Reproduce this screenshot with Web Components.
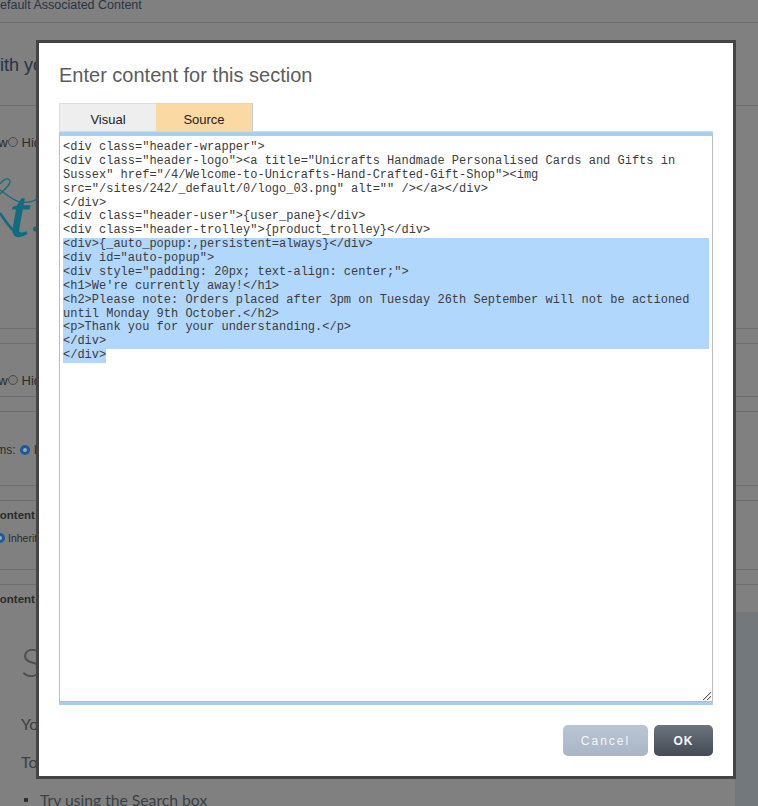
<!DOCTYPE html>
<html lang="en">
<head>
<meta charset="utf-8">
<title>Enter content for this section</title>
<style>
html,body{margin:0;padding:0;width:758px;height:806px;overflow:hidden;background:#808080}
</style>
</head>
<body>
<page-backdrop></page-backdrop>
<content-modal title-text="Enter content for this section"></content-modal>
<script>
function def(name, html, init){
  customElements.define(name, class extends HTMLElement{
    constructor(){super();this.attachShadow({mode:'open'}).innerHTML=html;}
    connectedCallback(){if(init)init(this);}
  });
}
def('bg-row',`<style>
:host{display:block;box-sizing:content-box;height:var(--h,14px);border-bottom:1px solid #6e6e6e;overflow:hidden;font:12px "Liberation Sans",sans-serif;color:#2b2b2b}
</style><slot></slot>`);
def('bg-radio',`<style>
:host{display:inline-block;box-sizing:border-box;width:10px;height:10px;border-radius:50%;border:1px solid #4c4c4c;background:#7c7c7c;flex:none}
:host([on]){border:3px solid #1d5a99;background:#9aa7b5}
</style>`);
def('radio-line',`<style>
:host{display:flex;align-items:center;height:14px;white-space:nowrap}
</style><slot></slot>`);
def('page-backdrop',`<style>
:host{display:block;width:758px;height:806px;overflow:hidden;background:#808080;font-family:"Liberation Sans",sans-serif}
.crumb{font-size:12.5px;line-height:14px;color:#263445;margin:-2px 0 0 -9px;white-space:nowrap}
.lead{font-size:18px;line-height:22px;color:#263445;margin:31px 0 0 -13px;white-space:nowrap}
.show{font-size:13px;margin-left:-25px;padding-top:29px}
.show2{font-size:13px;margin-left:-25px;padding-top:29px}
.t{margin-left:4px}
svg{display:block}
.logo{margin-top:15px;overflow:hidden}
.items-wrap{padding-top:31px;margin-left:-17px}
.b{font-weight:bold;font-size:11.5px;margin-left:-8.5px;line-height:14px;padding-top:7px}
.inh{margin:9px 0 0 -5px;font-size:10.5px}
.last-row{height:27px;overflow:hidden;font:12px "Liberation Sans",sans-serif;color:#2b2b2b}
.lower{display:flex;height:194px}
.copy{flex:1;min-width:0;font-family:Lato,sans-serif;color:#33404c;margin:0}
.s{font-family:Lato,sans-serif;font-weight:300;font-size:40px;line-height:48px;margin:26px 0 0 21px;color:#474f57}
.p{font-size:16px;line-height:20px;margin:0 0 0 21px;color:#3a4147}
.p1{margin-top:28px}.p2{margin-top:18px}
.li{display:flex;align-items:center;gap:12px;margin:18px 0 0 24px;font-size:15.7px;line-height:20px;color:#3a4147}
.sq{width:4px;height:4px;background:#2f2f2f;flex:none}
aside{width:23px;background:#73787c;flex:none}
</style>
<bg-row style="--h:22px"><div class="crumb">Default Associated Content</div></bg-row>
<bg-row style="--h:82px"><div class="lead">with yo</div></bg-row>
<bg-row style="--h:222px">
  <radio-line class="show">Show<bg-radio></bg-radio><span class="t">Hide</span></radio-line>
  <svg class="logo" width="37" height="80" viewBox="0 0 37 80" aria-hidden="true">
    <path d="M0 30C6 24 11 20 10 17C9 13 3 15 0 20M0 26C6 30 12 36 20 38C26 39 32 38 37 35" fill="none" stroke="#126c80" stroke-width="1.2"/>
    <path d="M0 49C4 55 8 62 15 68" fill="none" stroke="#126c80" stroke-width="2.6"/>
    <text x="10" y="72" font-family="Liberation Serif" font-style="italic" font-size="66" fill="#126c80" stroke="#126c80" stroke-width="1.4">t</text>
    <circle cx="35.5" cy="65" r="2.6" fill="#126c80"/>
  </svg>
</bg-row>
<bg-row style="--h:14px"></bg-row>
<bg-row style="--h:52px"><radio-line class="show2">Show<bg-radio></bg-radio><span class="t">Hide</span></radio-line></bg-row>
<bg-row style="--h:14px"></bg-row>
<bg-row style="--h:73px"><radio-line class="items-wrap">Items:<bg-radio on style="margin:0 4px"></bg-radio>Inherit</radio-line></bg-row>
<bg-row style="--h:14px"></bg-row>
<bg-row style="--h:68px"><div class="b">Content</div><radio-line class="inh"><bg-radio on style="margin-right:3px"></bg-radio>Inherit</radio-line></bg-row>
<bg-row style="--h:14px"></bg-row>
<div class="last-row"><div class="b">Content</div></div>
<div class="lower">
  <div class="copy">
    <div class="s">S</div>
    <div class="p p1">Yo</div>
    <div class="p p2">To</div>
    <div class="li"><span class="sq"></span><span>Try using the Search box</span></div>
  </div>
  <aside></aside>
</div>`);
def('tab-bar',`<style>
:host{display:flex;height:28px;font:13px/32px "Liberation Sans",sans-serif;color:#222}
div{text-align:center;box-sizing:border-box}
.v{width:97px;background:#eee;border:1px solid #ddd;border-bottom:0;border-right:0}
.s{width:97px;background:#fbd9a3;border-top:1px solid #e7d6b8;border-right:1px solid #c4ccd6}
</style><div class="v">Visual</div><div class="s">Source</div>`);
def('code-editor',`<style>
:host{display:block;height:574px;box-sizing:border-box}
.strip{height:3px;background:#a9cdf0}
.strip.top{height:4px;background:linear-gradient(#d3e5f7,#a9cdf0 40%);}
.box{box-sizing:border-box;height:567px;border:1px solid #bdbdbd;border-top-color:#c8c8c8;padding:5px 3px 0;overflow:hidden;position:relative}
pre{margin:0;font:12px/13.875px "Liberation Mono",monospace;color:#3c3c3c;white-space:pre}
.sel{background:#b2d7fd}
.last{display:inline-block;background:#b2d7fd}
svg{position:absolute;right:0;bottom:0}
</style>
<div class="strip top"></div>
<div class="box"><pre>&lt;div class="header-wrapper"&gt;
&lt;div class="header-logo"&gt;&lt;a title="Unicrafts Handmade Personalised Cards and Gifts in
Sussex" href="/4/Welcome-to-Unicrafts-Hand-Crafted-Gift-Shop"&gt;&lt;img
src="/sites/242/_default/0/logo_03.png" alt="" /&gt;&lt;/a&gt;&lt;/div&gt;
&lt;/div&gt;
&lt;div class="header-user"&gt;{user_pane}&lt;/div&gt;
&lt;div class="header-trolley"&gt;{product_trolley}&lt;/div&gt;
<div class="sel">&lt;div&gt;{_auto_popup:,persistent=always}&lt;/div&gt;
&lt;div id="auto-popup"&gt;
&lt;div style="padding: 20px; text-align: center;"&gt;
&lt;h1&gt;We're currently away!&lt;/h1&gt;
&lt;h2&gt;Please note: Orders placed after 3pm on Tuesday 26th September will not be actioned
until Monday 9th October.&lt;/h2&gt;
&lt;p&gt;Thank you for your understanding.&lt;/p&gt;
&lt;/div&gt;</div><span class="last">&lt;/div&gt;</span></pre>
<svg width="10" height="10" viewBox="0 0 10 10" aria-hidden="true"><path d="M1 9L9 1M5 9L9 5" stroke="#555" stroke-width="1"/><path d="M2 9L9 2M6 9L9 6" stroke="#ddd" stroke-width="1"/></svg>
</div>
<div class="strip"></div>`);
def('modal-button',`<style>
:host{display:flex;align-items:center;justify-content:center;box-sizing:border-box;height:31px;border-radius:5px;color:#f4f6f8;font:12px "Liberation Sans",sans-serif;cursor:pointer}
:host([kind=cancel]){width:85px;letter-spacing:2px;background:linear-gradient(#b9c5d3,#a9b6c6)}
:host([kind=ok]){width:59px;font-weight:bold;letter-spacing:1px;background:linear-gradient(#6c737c,#454b55)}
</style><slot></slot>`);
def('content-modal',`<style>
:host{position:absolute;left:36px;top:40px;width:700px;height:739px;box-sizing:border-box;border:3px solid #444;background:#fff;padding:0 20px 0 20px;display:flex;flex-direction:column}
h2{margin:19px 0 0;font:300 20px/26px "Liberation Sans",sans-serif;color:#5c5c5c}
tab-bar{margin-top:15px}
.actions{display:flex;justify-content:flex-end;gap:6px;margin-top:20px}
</style>
<h2 id="t"></h2>
<tab-bar></tab-bar>
<code-editor></code-editor>
<div class="actions"><modal-button kind="cancel">Cancel</modal-button><modal-button kind="ok">OK</modal-button></div>`,
el=>{el.shadowRoot.getElementById('t').textContent=el.getAttribute('title-text');});
</script>
</body>
</html>
